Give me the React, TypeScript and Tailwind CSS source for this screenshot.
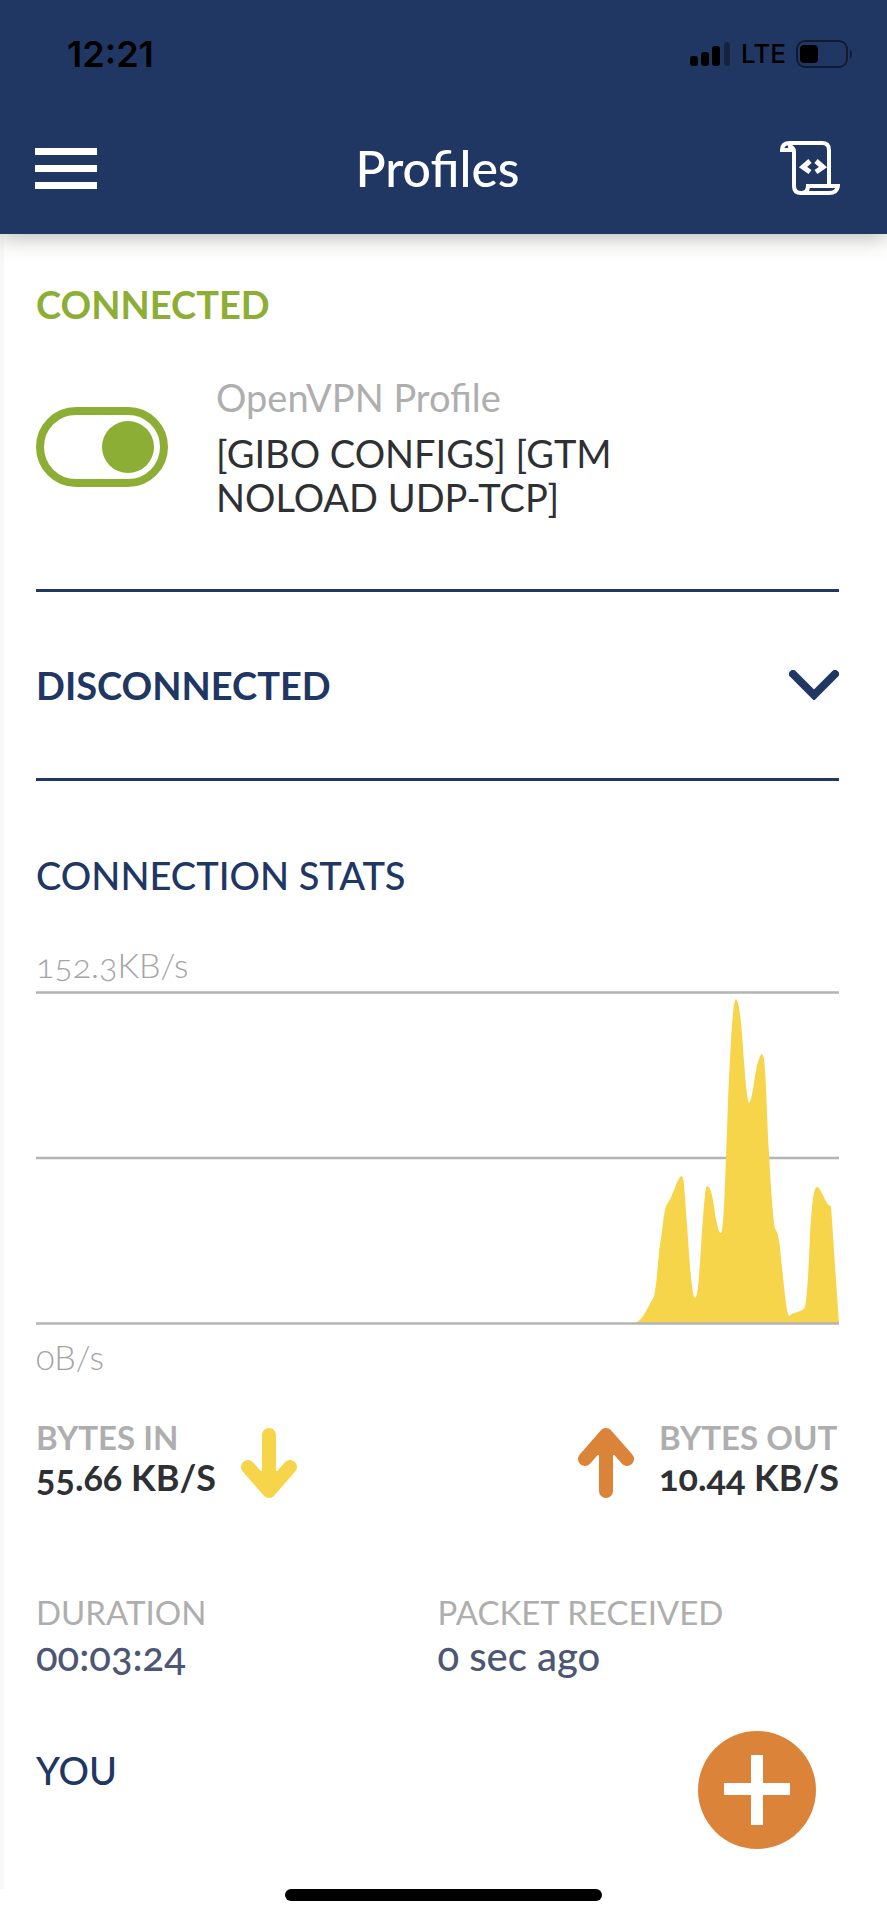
import React, { useState } from 'react';

const TRAFFIC_PATH =
  'M597 333 C604 330 606 327 609 322 C613 315 614 312 618 306 C622 285 622 262 625 248 C627 232 628 222 630 215 ' +
  'C637 206 640 190 645 185 C648 185 648 194 649 206 L654 276 C656 296 657 306 659 307 C662 306 663 285 665 256 ' +
  'C668 215 669 196 671 195 C676 195 678 216 680 228 C682 238 683 242 685 242 C688 240 689 190 692 112 ' +
  'C695 45 697 8 700 8 C704 10 706 42 708 70 C710 98 712 112 713 112 C716 110 718 90 720 80 C722 68 725 63 726 63 ' +
  'C730 64 730 110 733 162 C735 200 737 228 739 238 C743 241 744 256 746 276 C749 306 751 322 753 325 ' +
  'C757 321 767 321 769 316 C772 300 773 265 774 244 C776 210 778 196 781 196 C786 197 789 214 795 215 L803 333 Z';

function SignalIcon() {
  return (
    <svg width="41" height="26" viewBox="0 0 41 26" aria-hidden="true">
      <rect x="0" y="15" width="8" height="10" rx="3" />
      <rect x="11" y="11" width="8" height="14" rx="3" />
      <rect x="22" y="5" width="8" height="20" rx="3" />
      <rect x="34" y="1" width="6" height="24" rx="3" fillOpacity="0.35" />
    </svg>
  );
}

function BatteryIcon() {
  return (
    <svg width="58" height="28" viewBox="0 0 58 28" aria-hidden="true">
      <rect x="1" y="1" width="50" height="26" rx="8" fill="none" stroke="#000" strokeOpacity="0.5" strokeWidth="2" />
      <rect x="4" y="5" width="18" height="18" rx="4" />
      <path d="M54 9 Q58 14 54 19 Z" fillOpacity="0.5" />
    </svg>
  );
}

function ScriptIcon() {
  return (
    <svg width="60" height="55" viewBox="0 0 60 55" fill="none" stroke="#fff" strokeWidth="4" aria-hidden="true">
      <path d="M10 2 H42 Q49 2 49 9 V44" />
      <path d="M10 2 Q2 2 2 9 H14" />
      <path d="M8 6 Q14 5 14 11 V45 Q14 52 21 52 Q28 52 28 45 H58 Q57 52 49 52 H21" />
      <path d="M30 20 L23 26 L30 31 M36 20 L43 26 L36 31" strokeWidth="5" />
    </svg>
  );
}

function ArrowIcon({ className }: { className: string }) {
  return (
    <svg width="58" height="72" viewBox="0 0 58 72" className={className} aria-hidden="true">
      <path
        d="M29 8 V64 M8 40 L29 64 L50 40"
        fill="none"
        stroke="currentColor"
        strokeWidth="14"
        strokeLinecap="round"
        strokeLinejoin="round"
      />
      <path d="M20 44 H38 L29 64 Z" fill="currentColor" />
    </svg>
  );
}

function Header() {
  return (
    <header className="relative bg-[#213763] pt-9 pb-9 shadow-[0_4px_20px_rgba(60,60,40,0.35)]">
      <div className="flex h-9 items-center justify-between pl-[67px] pr-[33px] font-['Inter',sans-serif] text-black">
        <span className="text-[36px] leading-9 font-semibold">12:21</span>
        <div className="flex items-center gap-2.5">
          <SignalIcon />
          <span className="text-[26px] leading-9 font-medium">LTE</span>
          <BatteryIcon />
        </div>
      </div>
      <div className="mt-[66px] grid h-[60px] grid-cols-[1fr_auto_1fr] items-center pl-[35px] pr-[47px]">
        <button type="button" aria-label="Menu" className="flex w-[62px] flex-col gap-2.5">
          <span className="h-[7px] w-full bg-white" />
          <span className="h-[7px] w-full bg-white" />
          <span className="h-[7px] w-full bg-white" />
        </button>
        <h1 className="text-[50px] leading-[60px] font-medium text-white">Profiles</h1>
        <button type="button" aria-label="Log" className="justify-self-end">
          <ScriptIcon />
        </button>
      </div>
    </header>
  );
}

function TrafficChart() {
  return (
    <figure className="mt-[46px] text-[34px] leading-10 font-light text-[#a4a4a4]">
      <div>152.3KB/s</div>
      <svg viewBox="0 0 803 334" className="mt-1.5 block h-auto w-full" role="img" aria-label="Traffic">
        <path d="M0 1.5 H803 M0 167 H803" stroke="#b4b4b4" strokeWidth="2.5" />
        <path d={TRAFFIC_PATH} fill="#f7d54a" />
        <path d="M0 332.5 H803" stroke="#b4b4b4" strokeWidth="2.5" />
      </svg>
      <div className="mt-3">0B/s</div>
    </figure>
  );
}

export default function App() {
  const [connected, setConnected] = useState(true);

  return (
    <div className="flex min-h-screen flex-col bg-white font-['Lato',sans-serif] oldstyle-nums">
      <Header />

      <main className="flex-1 border-l-4 border-[#f8f8f8] pt-[46px] pr-12 pl-8">
        <section>
          <h2 className="text-[38px] leading-[48px] font-bold text-[#8dae35]">CONNECTED</h2>
          <div className="mt-[47px] flex items-center gap-12">
            <input
              id="profile-switch"
              type="checkbox"
              role="switch"
              checked={connected}
              onChange={() => setConnected(!connected)}
              className="flex h-20 w-[132px] shrink-0 appearance-none items-center rounded-full border-8 border-[#8dae35] px-1.5 before:size-[52px] before:rounded-full before:bg-[#8dae35] checked:justify-end"
            />
            <label htmlFor="profile-switch" className="text-[38px] leading-[44px]">
              <span className="block text-[#aeaeae]">OpenVPN Profile</span>
              <span className="mt-3 block max-w-[440px] text-[#2e3033]">[GIBO CONFIGS] [GTM NOLOAD UDP-TCP]</span>
            </label>
          </div>
        </section>

        <button
          type="button"
          className="mt-[70px] flex h-48 w-full items-center justify-between border-y-3 border-[#213763] text-[38px] leading-[48px] font-bold text-[#213763]"
        >
          DISCONNECTED
          <svg width="50" height="30" viewBox="0 0 50 30" aria-hidden="true">
            <path d="M4 4 L25 25 L46 4" fill="none" stroke="currentColor" strokeWidth="8" strokeLinecap="round" />
          </svg>
        </button>

        <section className="mt-[70px]">
          <h2 className="text-[38px] leading-[48px] font-medium text-[#213763]">CONNECTION STATS</h2>
          <TrafficChart />

          <div className="mt-10 flex justify-between leading-10 font-bold">
            <div className="flex gap-6">
              <div>
                <div className="text-[33px] text-[#aeaeae]">BYTES IN</div>
                <div className="text-[36px] text-[#2e3033]">55.66 KB/S</div>
              </div>
              <ArrowIcon className="mt-2.5 text-[#f7d54a]" />
            </div>
            <div className="flex gap-6">
              <ArrowIcon className="mt-2.5 rotate-180 text-[#dc833a]" />
              <div>
                <div className="text-[33px] text-[#aeaeae]">BYTES OUT</div>
                <div className="text-[36px] text-[#2e3033]">10.44 KB/S</div>
              </div>
            </div>
          </div>

          <dl className="mt-[91px] grid grid-cols-2 leading-[44px]">
            <div>
              <dt className="text-[33px] text-[#aeaeae]">DURATION</dt>
              <dd className="text-[40px] font-medium text-[#4d5672]">00:03:24</dd>
            </div>
            <div>
              <dt className="text-[33px] text-[#aeaeae]">PACKET RECEIVED</dt>
              <dd className="text-[40px] font-medium text-[#4d5672]">0 sec ago</dd>
            </div>
          </dl>

          <h2 className="mt-[68px] text-[38px] leading-[48px] font-medium text-[#213763]">YOU</h2>
        </section>
      </main>

      <button
        type="button"
        aria-label="Add profile"
        className="fixed right-[71px] bottom-[71px] flex size-[118px] items-center justify-center rounded-full bg-[#dc833a]"
      >
        <svg width="66" height="70" viewBox="0 0 66 70" aria-hidden="true">
          <path d="M33 0 V70 M0 34 H66" stroke="#fff" strokeWidth="12" />
        </svg>
      </button>

      <div className="mx-auto mb-[19px] h-3 w-[317px] rounded-full bg-black" />
    </div>
  );
}
